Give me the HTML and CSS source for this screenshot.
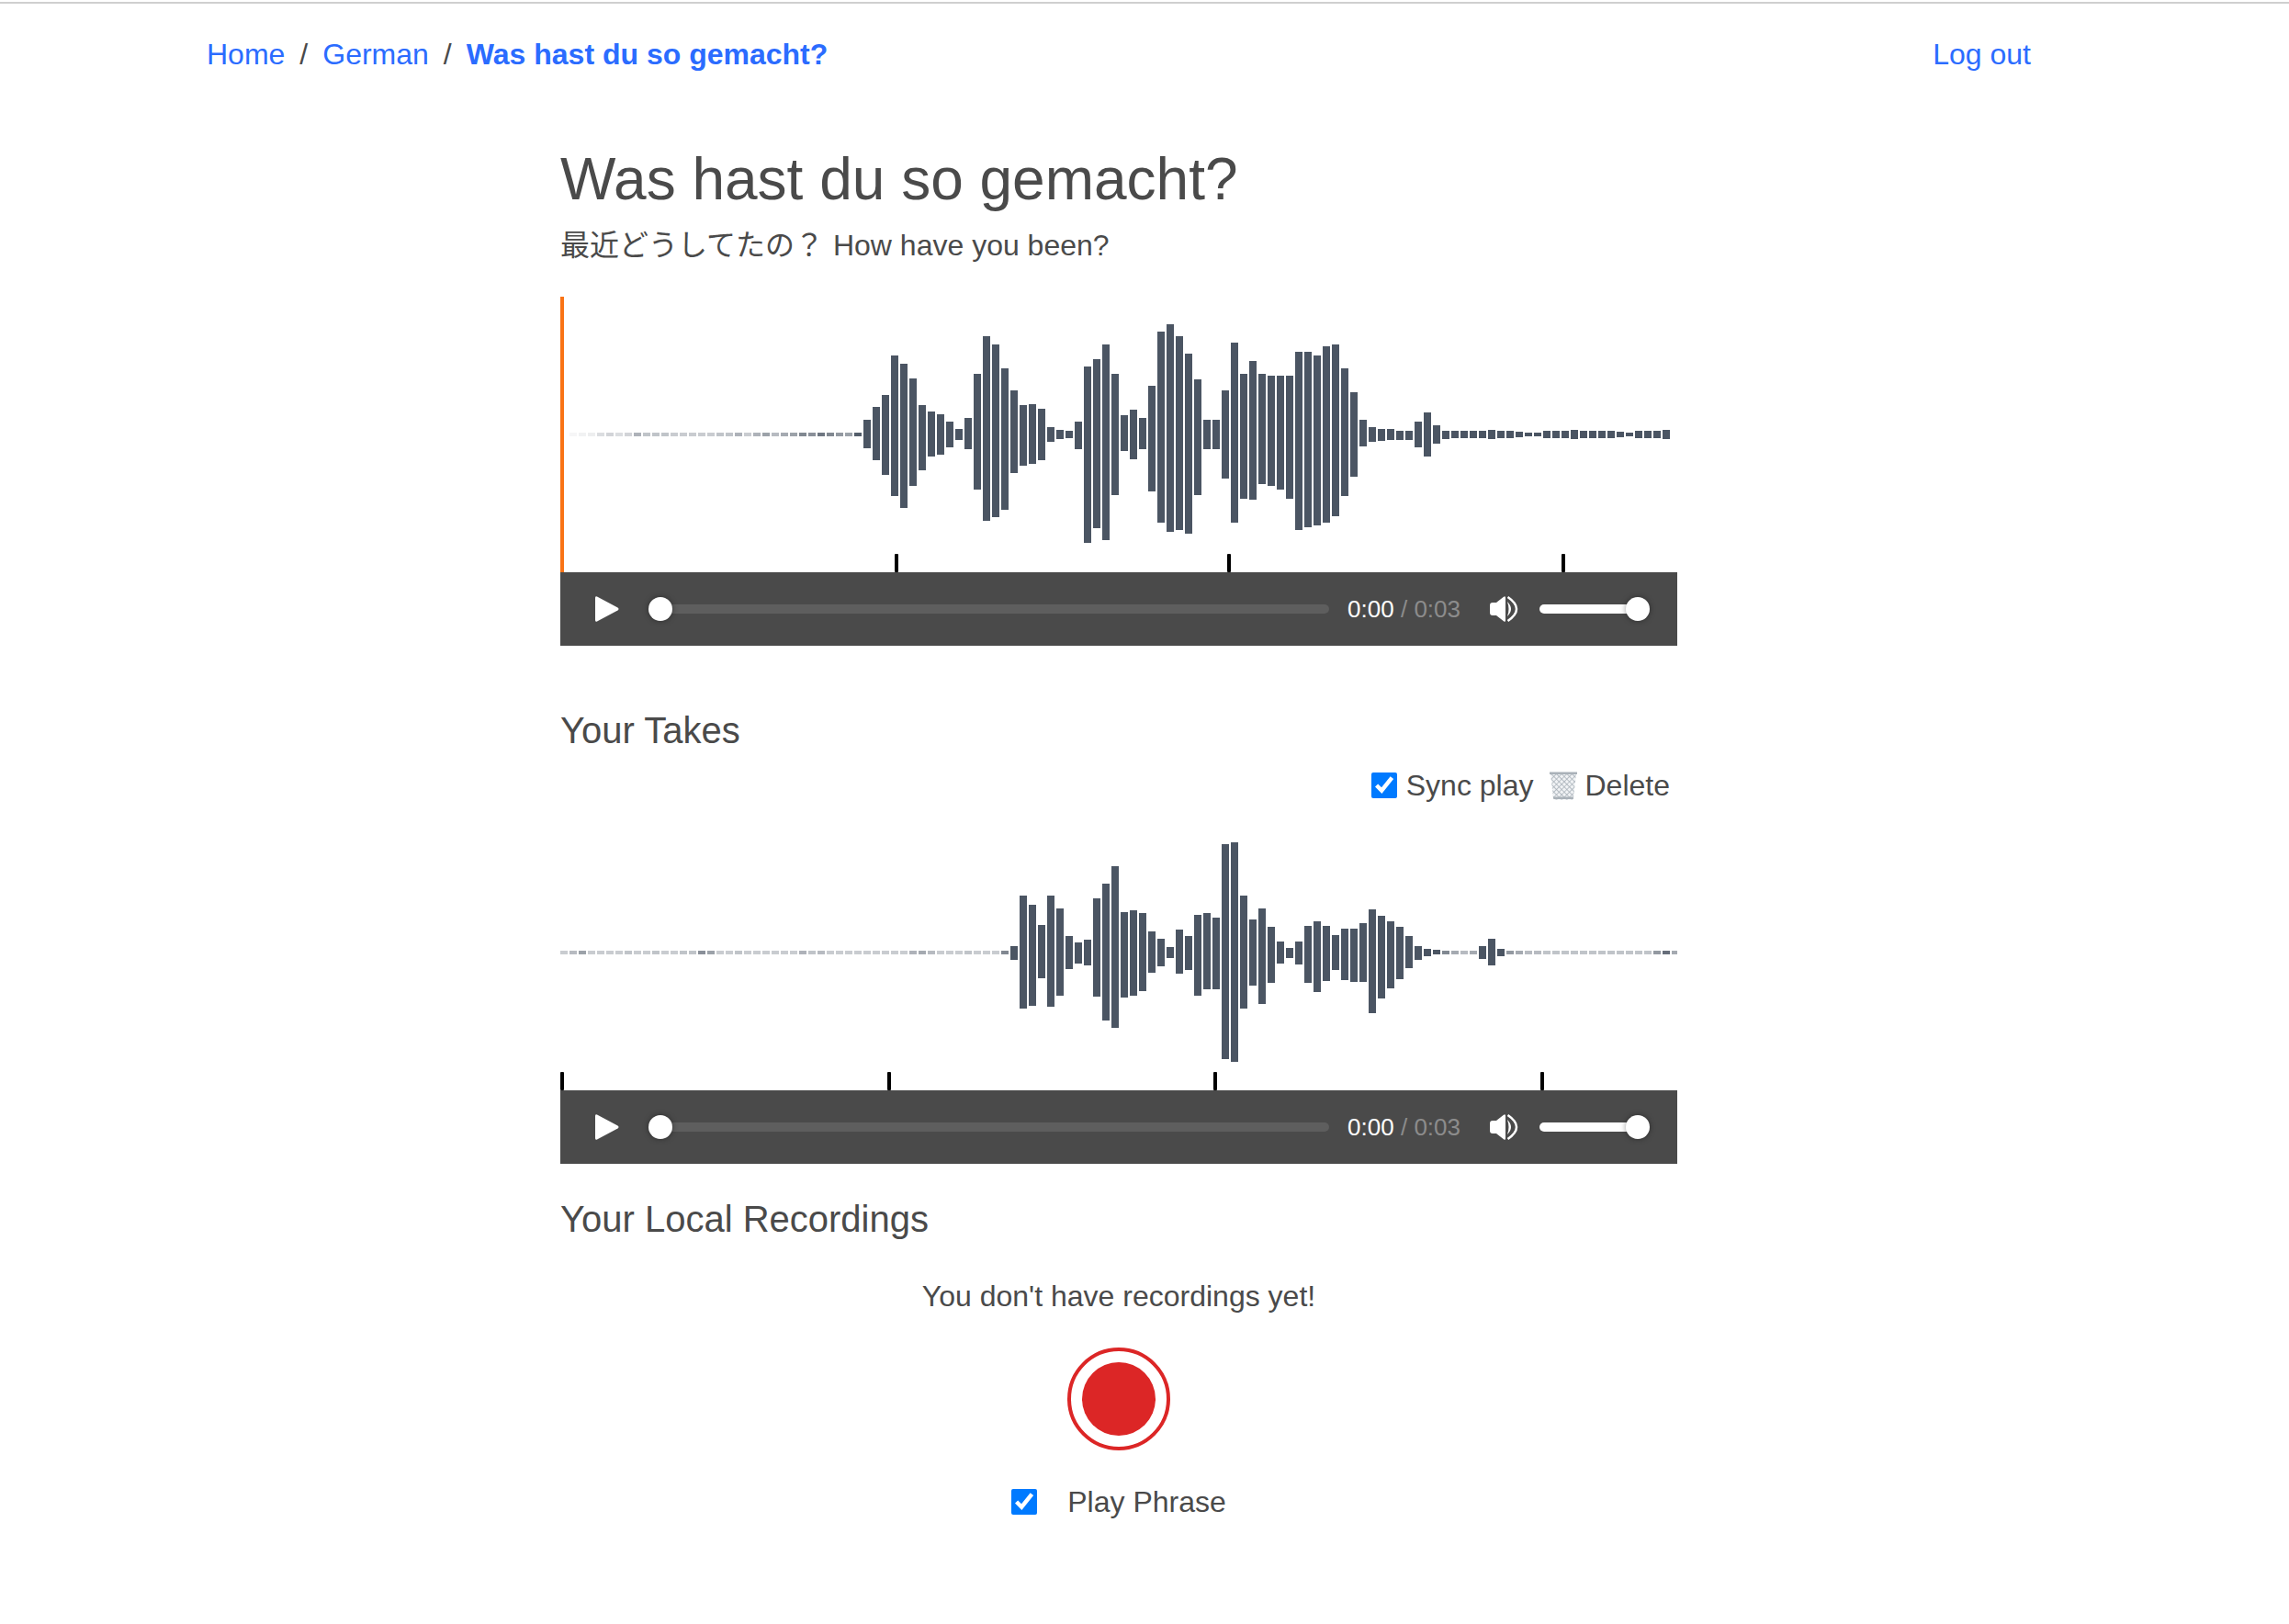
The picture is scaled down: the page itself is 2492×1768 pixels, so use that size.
FILE: index.html
```html
<!DOCTYPE html>
<html lang="en">
<head>
    <meta charset="UTF-8">
    <meta name="viewport" content="width=device-width, initial-scale=1.0">
    <title>Was hast du so gemacht?</title>
    <link rel="stylesheet" href="styles.css">
</head>
<body>
    <nav class="topnav">
        <div class="crumbs">
            <a href="#">Home</a>
            <span class="sep">/</span>
            <a href="#">German</a>
            <span class="sep">/</span>
            <a href="#" class="current">Was hast du so gemacht?</a>
        </div>
        <a href="#">Log out</a>
    </nav>

    <main class="phrase">
        <h1>Was hast du so gemacht?</h1>
        <p class="subtitle"><span lang="ja">最近どうしてたの？</span> How have you been?</p>

        <div class="wave" id="waveNative"></div>
        <div class="player">
            <svg class="play-icon" viewBox="0 0 26 30"><path d="M2 1.5 24.5 13.6q2 1.4 0 2.8L2 28.5Q0 29.5 0 27V3Q0 .5 2 1.5z"/></svg>
            <div class="track seek"><span class="thumb"></span></div>
            <div class="time">0:00 <span>/ 0:03</span></div>
            <svg class="volume-icon" viewBox="0 0 32 28">
                <path d="M0 10q0-3 3-3h4L15 .8q2-1.4 2 1v24.400q0 2.400-2 1L7 21H3q-3 0-3-3z"/>
                <path d="M19 6q8 8 0 16q3-8 0-16z"/>
                <path d="M19.500 1q19 13 0 26" class="outer"/>
            </svg>
            <div class="track volume"><span class="thumb"></span></div>
        </div>

        <h2 class="takes-title">Your Takes</h2>
        <div class="take-tools">
            <label class="check"><input type="checkbox" checked> Sync play</label>
            <span class="delete">
                <svg class="trash" viewBox="0 0 32 32">
                    <defs>
                        <pattern id="mesh" width="4" height="4" patternUnits="userSpaceOnUse" patternTransform="rotate(45)">
                            <rect width="4" height="4" fill="#f1f3f5"/>
                            <path d="M0 0h4M0 0v4" stroke="#a4adb5" stroke-width="1.4"/>
                        </pattern>
                    </defs>
                    <path d="M2 3h28l-3 27q-.2 1.500-2 1.500H7q-1.800 0-2-1.500z" fill="url(#mesh)"/>
                    <path d="M1 1.500h30v2.500H1z" fill="#a9b1b8"/>
                    <path d="M5 28.500h22l-.3 2.500H5.300z" fill="#a9b1b8"/>
                </svg>
                Delete
            </span>
        </div>

        <div class="wave" id="waveTake"></div>
        <div class="player">
            <svg class="play-icon" viewBox="0 0 26 30"><path d="M2 1.5 24.5 13.6q2 1.4 0 2.8L2 28.5Q0 29.5 0 27V3Q0 .5 2 1.5z"/></svg>
            <div class="track seek"><span class="thumb"></span></div>
            <div class="time">0:00 <span>/ 0:03</span></div>
            <svg class="volume-icon" viewBox="0 0 32 28">
                <path d="M0 10q0-3 3-3h4L15 .8q2-1.4 2 1v24.400q0 2.400-2 1L7 21H3q-3 0-3-3z"/>
                <path d="M19 6q8 8 0 16q3-8 0-16z"/>
                <path d="M19.500 1q19 13 0 26" class="outer"/>
            </svg>
            <div class="track volume"><span class="thumb"></span></div>
        </div>

        <h2 class="local-title">Your Local Recordings</h2>
        <p class="empty">You don't have recordings yet!</p>
        <button class="record" aria-label="Record"><span></span></button>
        <label class="check play-phrase"><input type="checkbox" checked> Play Phrase</label>
    </main>

    <script src="script.js"></script>
</body>
</html>
```

FILE: styles.css
```css
html {
    padding-top: 2px;
}

body {
    font-family: "Liberation Sans", "Noto Sans CJK JP", sans-serif;
    font-size: 32px;
    line-height: 48px;
    color: #4a4a4a;
    background: white;
    margin: 0;
    padding-right: 56px;
    border-top: 2px solid #cfcfcf;
}

a {
    color: #2b6cff;
    text-decoration: none;
}

.topnav {
    display: flex;
    justify-content: space-between;
    max-width: 1986px;
    margin: 0 auto;
    padding: 31px 0 0;
}

.crumbs {
    display: flex;
    gap: 16px;
}

.current {
    font-weight: bold;
}

.phrase {
    width: 1216px;
    margin: 0 auto;
    padding-top: 74px;
}

h1 {
    font-size: 64px;
    font-weight: normal;
    line-height: 76px;
    margin: 0;
}

.subtitle {
    margin: 10px 0 32px;
}

.subtitle span {
    margin-right: 1px;
}

h2 {
    font-size: 40px;
    font-weight: normal;
    line-height: 56px;
    margin: 0;
}

.wave {
    height: 300px;
}

.wave svg {
    display: block;
}

.player {
    display: flex;
    align-items: center;
    height: 80px;
    padding: 0 30px 0 38px;
    background: #4a4a4a;
}

.play-icon {
    width: 26px;
    height: 30px;
    fill: white;
    margin-right: 32px;
}

.track {
    position: relative;
    height: 10px;
    border-radius: 5px;
}

.seek {
    flex: 1;
    background: #5e5e5e;
    margin-left: 13px;
}

.volume {
    width: 107px;
    margin-right: 13px;
    background: white;
}

.thumb {
    position: absolute;
    top: -8px;
    width: 26px;
    height: 26px;
    border-radius: 50%;
    background: white;
    box-shadow: 0 0 6px rgba(0, 0, 0, 0.4);
}

.seek .thumb {
    left: -13px;
}

.volume .thumb {
    right: -13px;
}

.time {
    font-size: 26px;
    color: white;
    margin: 0 20px;
    white-space: nowrap;
}

.time span {
    color: #8c8c8c;
}

.volume-icon {
    width: 32px;
    height: 28px;
    fill: white;
    margin: 0 22px 0 12px;
}

.volume-icon .outer {
    fill: none;
    stroke: white;
    stroke-width: 2.5;
}

.takes-title {
    margin-top: 64px;
}

.take-tools {
    display: flex;
    justify-content: flex-end;
    align-items: center;
    gap: 16px;
    margin: 8px 8px 8px 0;
}

.check {
    display: flex;
    align-items: center;
    gap: 10px;
}

.check input {
    width: 28px;
    height: 28px;
    margin: 0;
    accent-color: #007aff;
}

.delete {
    display: flex;
    align-items: center;
    gap: 8px;
}

.trash {
    width: 32px;
    height: 32px;
}

.local-title {
    margin-top: 32px;
}

.empty {
    text-align: center;
    margin: 32px 0 32px;
}

.record {
    display: flex;
    align-items: center;
    justify-content: center;
    box-sizing: border-box;
    width: 112px;
    height: 112px;
    margin: 0 auto;
    padding: 0;
    border: 4px solid #dc2626;
    border-radius: 50%;
    background: white;
    cursor: pointer;
}

.record span {
    width: 80px;
    height: 80px;
    border-radius: 50%;
    background: #dc2626;
}

.play-phrase {
    justify-content: center;
    gap: 33px;
    margin-top: 32px;
}
```

FILE: script.js
```js
const BAR_COLOR = '#4b5563';
const WIDTH = 1216;
const HEIGHT = 300;

// silence bars only differ by how dark they are
function faint(list) {
    return list.map(o => [2, 2, o]);
}

function small(list) {
    return list.map(h => [h, h, 1]);
}

const nativeBars = [[0, 0, 0]].concat(
    faint([.05, .08, .1, .2, .25, .2, .25, .45, .35, .35, .35, .3, .3, .3, .3, .3, .35, .35, .45, .3, .45, .55, .4, .5, .55, .7, .65, .8, .7, .6, .55, .95]),
    [
        [16,15,1],[30,28,1],[43,44,1],[86,67,1],[77,80,1],[61,56,1],[32,39,1],[25,24,1],[22,22,1],[14,14,1],
        [6,6,1],[18,16,1],[66,60,1],[107,94,1],[98,90,1],[72,82,1],[48,42,1],[32,34,1],[33,32,1],[28,28,1],
        [8,8,1],[5,5,1],[4,4,1],[14,16,1],[74,118,1],[82,102,1],[98,115,1],[66,66,1],[21,18,1],[27,27,1],
        [18,16,1],[53,62,1],[112,96,1],[120,106,1],[107,104,1],[88,108,1],[60,66,1],[16,16,1],[16,16,1],[48,48,1],
        [100,96,1],[66,70,1],[80,71,1],[66,54,1],[64,56,1],[64,60,1],[64,70,1],[90,104,1],[90,101,1],[86,99,1],
        [96,96,1],[98,89,1],[72,67,1],[46,46,1],[16,13,1],[8,8,1],[6,7,1],[6,6,1],[4,6,1],[4,6,1],
        [14,14,1],[24,24,1],[10,10,1],[4,5,1]
    ],
    small([4, 4, 4, 4, 5, 4, 4, 3, 2, 2, 4, 4, 4, 5, 4, 4, 4, 4, 3, 2, 4, 4, 4, 5])
);

const takeBars = faint([.3, .4, .55, .3, .3, .3, .3, .35, .3, .3, .35, .3, .3, .35, .35, .65, .55, .3, .3, .35, .3, .3, .3, .3, .3, .3, .45, .35, .4, .3, .3, .3, .3, .3, .3, .3, .3, .3, .45, .5, .4, .3, .3, .3, .35, .3, .3, .3, .7]).concat(
    [
        [7,8,1],[62,61,1],[52,58,1],[30,28,1],[62,59,1],[48,47,1],[18,18,1],[11,12,1],[14,14,1],[59,48,1],
        [75,74,1],[94,82,1],[44,49,1],[46,47,1],[43,42,1],[23,22,1],[15,15,1],[6,6,1],[25,23,1],[18,19,1],
        [41,47,1],[43,40,1],[38,40,1],[118,116,1],[120,119,1],[62,61,1],[36,36,1],[48,56,1],[28,33,1],[12,12,1],
        [5,6,1],[12,13,1],[29,33,1],[34,43,1],[29,31,1],[19,19,1],[26,30,1],[26,32,1],[32,32,1],[47,66,1],
        [40,50,1],[34,39,1],[28,29,1],[18,17,1],[7,8,1],[4,4,1],[3,2,1]
    ],
    faint([.7, .5, .4, .5]),
    [[7,7,1],[15,14,1],[4,4,1]],
    faint([.6, .5, .4, .4, .35, .35, .35, .35, .35, .35, .35, .35, .35, .35, .35, .35, .6, .85, .5])
);

function drawWave(id, bars, ticks, cursor) {
    let svg = `<svg width="${WIDTH}" height="${HEIGHT}" viewBox="0 0 ${WIDTH} ${HEIGHT}">`;
    bars.forEach((bar, i) => {
        const [up, down, opacity] = bar;
        if (up + down === 0) return;
        svg += `<rect x="${i * 10}" y="${150 - up}" width="8" height="${up + down}" fill="${BAR_COLOR}" opacity="${opacity}"/>`;
    });
    ticks.forEach(x => {
        svg += `<rect x="${x}" y="280" width="4" height="20" rx="1" fill="black"/>`;
    });
    if (cursor) {
        svg += `<rect x="0" y="0" width="4" height="300" fill="#f97316"/>`;
    }
    svg += '</svg>';
    document.getElementById(id).innerHTML = svg;
}

drawWave('waveNative', nativeBars, [364, 726, 1090], true);
drawWave('waveTake', takeBars, [0, 356, 711, 1067], false);
```
